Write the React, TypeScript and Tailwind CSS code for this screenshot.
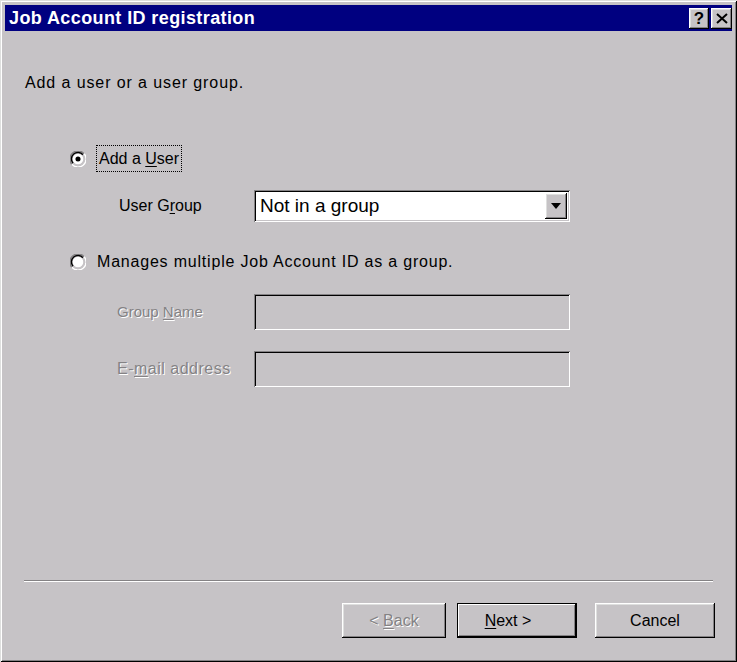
import React from "react";

const font = { fontFamily: '"Liberation Sans", Arial, sans-serif' };

function Radio({ checked }: { checked?: boolean }) {
  return (
    <svg width="16" height="16" viewBox="0 0 12 12" className="shrink-0">
      <path d="M10.5 2 A5.5 5.5 0 0 0 1.5 10" fill="none" stroke="#848284" strokeWidth="1.1" />
      <path d="M9.7 2.8 A4.5 4.5 0 0 0 2.3 9.2" fill="none" stroke="#000" strokeWidth="1.1" />
      <circle cx="6" cy="6" r="4" fill="#fff" />
      <path d="M1.5 10 A5.5 5.5 0 0 0 10.5 2" fill="none" stroke="#fff" strokeWidth="1.1" />
      <path d="M2.3 9.2 A4.5 4.5 0 0 0 9.7 2.8" fill="none" stroke="#c6c3c6" strokeWidth="1.1" />
      {checked && <circle cx="6" cy="6" r="1.9" fill="#000" />}
    </svg>
  );
}

const sunken =
  "shadow-[inset_1px_1px_0_#848284,inset_-1px_-1px_0_#ffffff,inset_2px_2px_0_#000000,inset_-2px_-2px_0_#c6c3c6]";
const raised =
  "shadow-[inset_-1px_-1px_0_#000000,inset_1px_1px_0_#ffffff,inset_-2px_-2px_0_#848284,inset_2px_2px_0_#dedfde]";
const raisedDefault =
  "shadow-[inset_0_0_0_1px_#000000,inset_-2px_-2px_0_#000000,inset_2px_2px_0_#ffffff,inset_-3px_-3px_0_#848284]";

function DisabledLabel({ children }: { children: React.ReactNode }) {
  return (
    <span className="text-[#848284] [text-shadow:1px_1px_0_#ffffff]">{children}</span>
  );
}

export default function App() {
  return (
    <div
      style={font}
      className="w-[737px] h-[662px] bg-[#c6c3c6] p-[5px] flex flex-col text-[16px] text-black shadow-[inset_1px_1px_0_#dedfde,inset_-1px_-1px_0_#000000,inset_2px_2px_0_#ffffff,inset_-2px_-2px_0_#848284]"
    >
      {/* Title bar */}
      <div className="h-[26px] bg-[#000080] flex items-center pl-[4px] pr-[0px] shrink-0">
        <span className="text-white font-bold text-[18px] tracking-[0.4px]">
          Job Account ID registration
        </span>
        <div className="ml-auto flex gap-[2px]">
          <div className={`w-[20px] h-[21px] bg-[#c6c3c6] ${raised} flex items-center justify-center font-bold text-[17px] leading-none`}>
            ?
          </div>
          <div className={`w-[21px] h-[21px] bg-[#c6c3c6] ${raised} flex items-center justify-center`}>
            <svg width="12" height="11" viewBox="0 0 12 11">
              <path d="M1 1 L11 10 M11 1 L1 10" stroke="#000" strokeWidth="2" />
            </svg>
          </div>
        </div>
      </div>

      {/* Body */}
      <div className="flex-1 flex flex-col">
        <div className="mt-[43px] pl-[20px] leading-[18px] tracking-[0.9px]">Add a user or a user group.</div>

        <div className="mt-[53px] pl-[65px] flex items-center h-[27px]">
          <Radio checked />
          <div className="ml-[10px] h-[27px] px-[2px] flex items-center border border-dotted border-black">
            <span>
              Add a <span className="underline underline-offset-2">U</span>ser
            </span>
          </div>
        </div>

        <div className="mt-[18px] flex items-center h-[32px]">
          <div className="w-[249px] pl-[114px]">
            User G<span className="underline underline-offset-2">r</span>oup
          </div>
          <div className={`w-[316px] h-[32px] bg-white ${sunken} flex items-center pl-[6px] pr-[3px]`}>
            <span className="flex-1 text-[19px]">Not in a group</span>
            <div className={`w-[22px] h-[26px] bg-[#c6c3c6] ${raised} flex items-center justify-center`}>
              <svg width="10" height="6" viewBox="0 0 10 6">
                <path d="M0 0 H10 L5 6 Z" fill="#000" />
              </svg>
            </div>
          </div>
        </div>

        <div className="mt-[26px] pl-[65px] flex items-center h-[27px]">
          <Radio />
          <div className="ml-[11px] tracking-[0.8px]">Manages multiple Job Account ID as a group.</div>
        </div>

        <div className="mt-[19px] flex items-center h-[36px]">
          <div className="w-[249px] pl-[112px] text-[15px]">
            <DisabledLabel>
              Group <span className="underline underline-offset-2">N</span>ame
            </DisabledLabel>
          </div>
          <div className={`w-[316px] h-[36px] bg-[#c6c3c6] ${sunken}`} />
        </div>

        <div className="mt-[21px] flex items-center h-[36px]">
          <div className="w-[249px] pl-[112px] tracking-[0.5px]">
            <DisabledLabel>
              E-<span className="underline underline-offset-2">m</span>ail address
            </DisabledLabel>
          </div>
          <div className={`w-[316px] h-[36px] bg-[#c6c3c6] ${sunken}`} />
        </div>

        <div className="flex-1" />

        <div className="mx-[19px] h-[2px] border-t border-t-[#848284] border-b border-b-white" />

        <div className="mt-[21px] mb-[19px] flex justify-end pr-[17px] h-[35px]">
          <div className={`w-[104px] h-[35px] bg-[#c6c3c6] ${raised} flex items-center justify-center`}>
            <DisabledLabel>
              &lt; <span className="underline underline-offset-2">B</span>ack
            </DisabledLabel>
          </div>
          <div className={`ml-[11px] w-[120px] h-[35px] bg-[#c6c3c6] ${raisedDefault} flex items-center justify-center pr-[18px]`}>
            <span>
              <span className="underline underline-offset-2">N</span>ext &gt;
            </span>
          </div>
          <div className={`ml-[18px] w-[120px] h-[35px] bg-[#c6c3c6] ${raised} flex items-center justify-center`}>
            Cancel
          </div>
        </div>
      </div>
    </div>
  );
}
